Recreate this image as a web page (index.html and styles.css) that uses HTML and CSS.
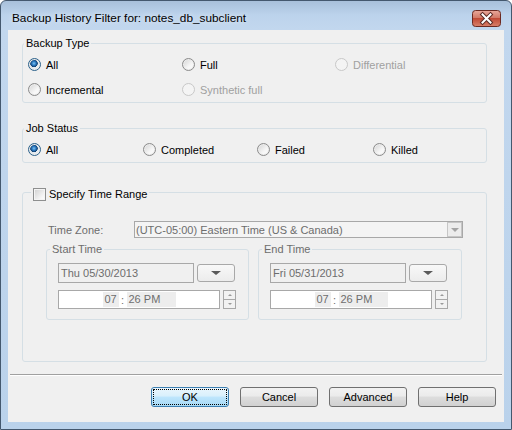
FILE: index.html
```html
<!DOCTYPE html>
<html lang="en">
<head>
    <meta charset="UTF-8">
    <title>Backup History Filter</title>
    <link rel="stylesheet" href="styles.css">
</head>
<body>
    <div class="window">
        <div class="titlebar">
            <span class="title">Backup History Filter for: notes_db_subclient</span>
            <button class="close" aria-label="Close">
                <svg width="29" height="17" viewBox="0 0 29 17">
                    <defs>
                        <linearGradient id="red" x1="0" y1="0" x2="0" y2="1">
                            <stop offset="0" stop-color="#e9a99c"/>
                            <stop offset="0.45" stop-color="#d27a68"/>
                            <stop offset="0.5" stop-color="#c04a36"/>
                            <stop offset="1" stop-color="#d9816b"/>
                        </linearGradient>
                    </defs>
                    <rect x="0.5" y="0.5" width="28" height="16" rx="3" fill="url(#red)" stroke="#6b2a22"/>
                    <path d="M10.5 4.5 L18.5 12.5 M18.5 4.5 L10.5 12.5" stroke="#5a2a24" stroke-width="4" stroke-linecap="square"/>
                    <path d="M10.5 4.5 L18.5 12.5 M18.5 4.5 L10.5 12.5" stroke="#ffffff" stroke-width="2" stroke-linecap="square"/>
                </svg>
            </button>
        </div>

        <div class="client">
            <fieldset class="group backup">
                <legend>Backup Type</legend>
                <div class="opts cols-backup">
                    <label class="opt"><span class="radio on"></span>All</label>
                    <label class="opt"><span class="radio"></span>Full</label>
                    <label class="opt off"><span class="radio"></span>Differential</label>
                    <label class="opt"><span class="radio"></span>Incremental</label>
                    <label class="opt off"><span class="radio"></span>Synthetic full</label>
                </div>
            </fieldset>

            <fieldset class="group status">
                <legend>Job Status</legend>
                <div class="opts cols-status">
                    <label class="opt"><span class="radio on"></span>All</label>
                    <label class="opt"><span class="radio"></span>Completed</label>
                    <label class="opt"><span class="radio"></span>Failed</label>
                    <label class="opt"><span class="radio"></span>Killed</label>
                </div>
            </fieldset>

            <fieldset class="group range">
                <legend class="check-legend"><span class="checkbox"></span>Specify Time Range</legend>
                <div class="tz-row">
                    <span class="tz-label">Time Zone:</span>
                    <div class="combo">
                        <span class="combo-text">(UTC-05:00) Eastern Time (US &amp; Canada)</span>
                        <span class="combo-btn"><span class="tri small"></span></span>
                    </div>
                </div>
                <div class="times">
                    <fieldset class="sub start">
                        <legend>Start Time</legend>
                        <div class="date-row">
                            <div class="datebox">Thu 05/30/2013</div>
                            <span class="drop-btn"><span class="tri"></span></span>
                        </div>
                        <div class="time-row">
                            <div class="timebox"><span class="seg">07</span><span class="colon">:</span><span class="seg wide">26 PM</span></div>
                            <span class="spin"><span class="up"></span><span class="down"></span></span>
                        </div>
                    </fieldset>
                    <fieldset class="sub end">
                        <legend>End Time</legend>
                        <div class="date-row">
                            <div class="datebox">Fri 05/31/2013</div>
                            <span class="drop-btn"><span class="tri"></span></span>
                        </div>
                        <div class="time-row">
                            <div class="timebox"><span class="seg">07</span><span class="colon">:</span><span class="seg wide">26 PM</span></div>
                            <span class="spin"><span class="up"></span><span class="down"></span></span>
                        </div>
                    </fieldset>
                </div>
            </fieldset>

            <div class="separator"></div>

            <div class="buttons">
                <button class="btn default">OK</button>
                <button class="btn">Cancel</button>
                <button class="btn">Advanced</button>
                <button class="btn">Help</button>
            </div>
        </div>
    </div>
</body>
</html>
```

FILE: styles.css
```css
* {
    box-sizing: border-box;
}
body {
    margin: 0;
    font-family: "Liberation Sans", Arial, sans-serif;
    font-size: 11px;
    color: #000;
    background: #fff;
}
.window {
    width: 512px;
    height: 430px;
    border: 1px solid #44586e;
    border-radius: 6px 6px 0 0;
    background: linear-gradient(#a8c0da, #bcd3ec 14px, #c2d7ee 28px, #bad2eb);
    padding: 0 7px 7px;
    display: flex;
    flex-direction: column;
}
.titlebar {
    height: 29px;
    display: flex;
    align-items: flex-start;
    padding: 9px 3px 0 4px;
}
.title {
    font-size: 11.8px;
    line-height: 16px;
    color: #000;
    text-shadow: 0 0 6px rgba(255, 255, 255, 0.8);
}
.close {
    margin-left: auto;
    padding: 0;
    border: none;
    background: none;
    width: 29px;
    height: 17px;
    display: block;
}
.close svg {
    display: block;
}
.client {
    flex: 1;
    background: #f0f0f0;
    display: flex;
    flex-direction: column;
}

/* group boxes */
.group, .sub {
    border: 1px solid #d5dfe5;
    border-radius: 3px;
    padding: 0;
    min-width: 0;
}
.group {
    margin: 0 17px 0 14px;
}
.group legend, .sub legend {
    padding: 0 2px;
    margin-left: 1px;
    line-height: 13px;
}
.backup {
    margin-top: 7px;
}
.status {
    margin-top: 19px;
}
.range {
    margin-top: 20px;
    padding-bottom: 41px;
}
.opts {
    display: grid;
    grid-auto-rows: 25px;
    padding: 2px 0 0 5px;
}
.cols-backup {
    grid-template-columns: 154px 153px 1fr;
}
.cols-status {
    grid-template-columns: 115px 114px 116px 1fr;
}
.opt {
    display: flex;
    align-items: center;
    gap: 5px;
    white-space: nowrap;
}
.opt.off {
    color: #a0a0a0;
}
.radio {
    flex: none;
    width: 13px;
    height: 13px;
    border-radius: 50%;
    border: 1px solid #8b8b8b;
    background: linear-gradient(135deg, #d2d2d2, #f6f6f6 60%, #ffffff);
    box-shadow: inset 0 0 0 1px #ececec;
}
.radio.on {
    border-color: #2c628b;
    background:
        radial-gradient(circle at 45% 40%, #7ec4f2 0, #2a78c0 2px, #0f3f70 3.5px, transparent 4px),
        linear-gradient(135deg, #c6d2dc, #f2f5f8);
}
.opt.off .radio {
    border-color: #c8c8c8;
    background: #f4f4f4;
    box-shadow: none;
}

/* time range */
.group .check-legend {
    display: flex;
    align-items: center;
    gap: 3px;
    padding: 5px 2px 0;
    margin-left: 8px;
}
.checkbox {
    width: 13px;
    height: 13px;
    border: 1px solid #8e8f8f;
    background: linear-gradient(135deg, #d0d0d0, #f4f4f4 70%, #fff);
    box-shadow: inset 0 0 0 1px #f4f4f4;
}
.tz-row {
    display: flex;
    align-items: center;
    height: 17px;
    margin-top: 20px;
    padding-left: 25px;
}
.tz-label {
    width: 86px;
    color: #6d6d6d;
}
.combo {
    width: 329px;
    height: 17px;
    border: 1px solid #a8a8a8;
    background: #f4f4f4;
    display: flex;
    align-items: center;
    color: #6d6d6d;
}
.combo-text {
    flex: 1;
    padding-left: 1px;
    white-space: nowrap;
}
.combo-btn {
    width: 15px;
    height: 15px;
    border: 1px solid #c6c6c6;
    background: #ececec;
    display: flex;
    align-items: center;
    justify-content: center;
}
.tri {
    width: 0;
    height: 0;
    border-left: 5px solid transparent;
    border-right: 5px solid transparent;
    border-top: 4px solid #5a5a5a;
}
.tri.small {
    border-left-width: 4px;
    border-right-width: 4px;
    border-top: 4px solid #a4a4a4;
}
.times {
    display: flex;
    gap: 9px;
    margin: 5px 0 0 23px;
}
.sub {
    margin: 0;
    padding: 7px 0 10px;
}
.sub legend {
    color: #6d6d6d;
    margin-left: 3px;
}
.start {
    width: 203px;
}
.end {
    width: 204px;
}
.date-row, .time-row {
    display: flex;
    align-items: center;
    gap: 3px;
    margin-left: 11px;
}
.time-row {
    margin-top: 7px;
}
.datebox {
    width: 136px;
    height: 20px;
    border: 1px solid #a8a8a8;
    background: #f0f0f0;
    color: #6d6d6d;
    line-height: 18px;
    padding-left: 2px;
}
.drop-btn {
    width: 38px;
    height: 18px;
    border: 1px solid #a8a8a8;
    border-radius: 3px;
    background: linear-gradient(#f8f8f8, #ececec);
    display: flex;
    align-items: center;
    justify-content: center;
}
.timebox {
    width: 162px;
    height: 19px;
    border: 1px solid #a8a8a8;
    background: #fff;
    color: #6d6d6d;
    display: flex;
    align-items: center;
    justify-content: center;
}
.seg {
    background: #ededed;
    height: 15px;
    line-height: 15px;
    width: 16px;
    text-align: center;
}
.seg.wide {
    width: 49px;
    text-align: left;
    padding-left: 2px;
}
.colon {
    width: 8px;
    text-align: center;
}
.spin {
    width: 13px;
    height: 19px;
    display: flex;
    flex-direction: column;
}
.spin span {
    flex: 1;
    border: 1px solid #a8a8a8;
    background: #f2f2f2;
    display: flex;
    align-items: center;
    justify-content: center;
}
.spin .down {
    border-top: none;
}
.spin .up::after, .spin .down::after {
    content: "";
    border-left: 2px solid transparent;
    border-right: 2px solid transparent;
}
.spin .up::after {
    border-bottom: 2px solid #9a9a9a;
}
.spin .down::after {
    border-top: 2px solid #9a9a9a;
}

/* footer */
.separator {
    margin: 12px 2px 0;
    border-top: 1px solid #a0a0a0;
    border-bottom: 1px solid #fff;
}
.buttons {
    display: flex;
    justify-content: flex-end;
    gap: 11px;
    margin: 11px 8px 0 0;
}
.btn {
    width: 78px;
    height: 20px;
    border: 1px solid #707070;
    border-radius: 3px;
    background: linear-gradient(#f2f2f2, #ebebeb 45%, #dddddd 50%, #d1d1d1);
    font-family: "Liberation Sans", Arial, sans-serif;
    font-size: 11px;
    color: #000;
    padding: 0;
}
.btn.default {
    border-color: #3c7fb1;
    background: linear-gradient(#eaf6fd, #d9f0fc 45%, #bee6fd 50%, #a7d9f5);
    outline: 1px dotted #000;
    outline-offset: -3px;
}
```
